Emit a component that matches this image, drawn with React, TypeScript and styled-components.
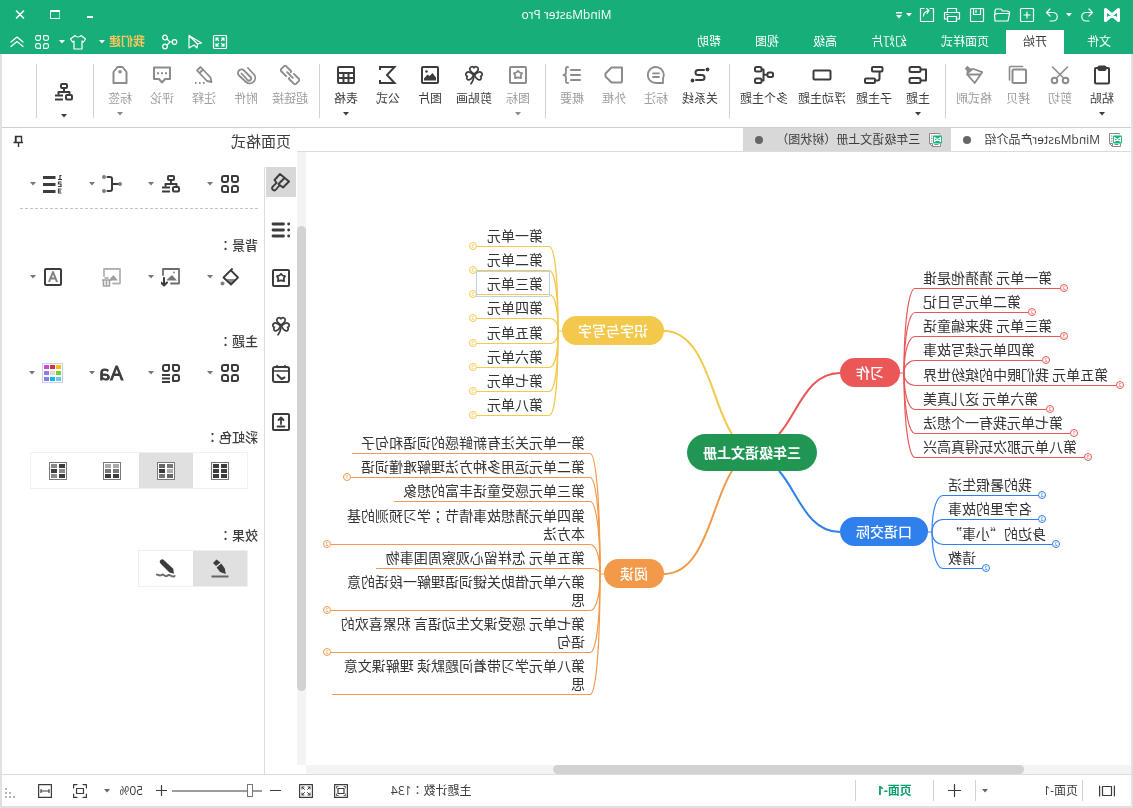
import React from "react";
import styled, { createGlobalStyle, css } from "styled-components";

const ink = "#3c3c3c";
const muted = "#8c8c8c";
const line = "#dcdcdc";
const green = "#17ae7a";

const GlobalStyle = createGlobalStyle`
  *, *::before, *::after { box-sizing: border-box; }
  body {
    margin: 0;
    background: #ffffff;
    color: #333333;
    font: 12px/16px "Open Sans", "Noto Sans CJK SC", sans-serif;
  }
  button, select, input { font: inherit; color: inherit; margin: 0; }
  svg { display: block; flex: none; }
`;

/* ---------- shell ---------- */

/* The window is presented in mirror view: one flip on the shell, everything inside is laid out normally. */
const Shell = styled.div`
  display: flex;
  flex-direction: column;
  min-height: 100vh;
  overflow: hidden;
  transform: scaleX(-1);
`;

const Frame = styled.div`
  flex: 1;
  display: flex;
  flex-direction: column;
  border: 2px solid #e0e0e0;
  border-top: 0;
`;

const PlainButton = styled.button`
  display: flex;
  align-items: center;
  justify-content: center;
  padding: 0;
  border: 0;
  background: transparent;
  cursor: pointer;
`;

/* Full-width punctuation centred in its square. */
const Mark = styled.span`
  font-family: "Noto Sans CJK TC", sans-serif;
`;

/* ---------- header ---------- */

const Header = styled.header`
  background: ${green};
  color: #ffffff;
`;

const TitleBar = styled.div`
  display: grid;
  grid-template-columns: 1fr auto 1fr;
  align-items: center;
  height: 30px;
  padding: 0 12px;
`;

const QuickBar = styled.div`
  display: flex;
  align-items: center;
  gap: 7px;
`;

const QuickButton = styled(PlainButton)`
  width: 18px;
  height: 18px;
`;

const CaretButton = styled(PlainButton)`
  width: 7px;
  height: 18px;
  margin: 0 -2px;
`;

const AppTitle = styled.h1`
  margin: 0;
  font-size: 12px;
  line-height: 16px;
  font-weight: 400;
`;

const WindowControls = styled.div`
  display: flex;
  justify-content: flex-end;
  gap: 18px;
`;

const WindowButton = styled(PlainButton)`
  width: 17px;
  height: 20px;
`;

const MenuBar = styled.div`
  display: flex;
  justify-content: space-between;
  height: 24px;
`;

const MenuTabs = styled.nav`
  display: flex;
  padding-left: 5px;
`;

const MenuTab = styled(PlainButton)<{ $active?: boolean }>`
  padding: 0 17px;
  ${(p) => p.$active && css`background: #ffffff; color: ${ink};`}
  &:first-child { margin-right: 6px; }
`;

const MenuTools = styled.div`
  display: flex;
  align-items: center;
  gap: 7px;
  padding-right: 8px;
  ${CaretButton} { margin: 0 1px 0 -4px; }
`;

const Account = styled.div`
  display: flex;
  align-items: center;
  gap: 7px;
  margin: 0 4px 0 9px;
`;

const Promo = styled(PlainButton)`
  color: #f7c65c;
  font-weight: 700;
`;

/* ---------- ribbon ---------- */

const Ribbon = styled.div`
  display: flex;
  height: 74px;
  padding: 10px 0 9px 8px;
  border-bottom: 1px solid #cfcfcf;
`;

const RibbonGroup = styled.div`
  display: flex;
  padding-right: 5px;
  margin-right: 6px;
  border-right: 1px solid #d2d2d2;
`;

const RibbonItem = styled(PlainButton)<{ $muted?: boolean }>`
  flex-direction: column;
  justify-content: flex-start;
  gap: 5px;
  min-width: 42px;
  padding: 1px 5px 0;
  color: ${(p) => (p.$muted ? muted : ink)};
  white-space: nowrap;
  span { padding-top: 1px; opacity: ${(p) => (p.$muted ? 0.85 : 1)}; }
`;

const RibbonLayout = styled(RibbonItem)`
  width: 45px;
  gap: 12px;
  padding-top: 18px;
`;

/* ---------- workspace ---------- */

const Workspace = styled.div`
  flex: 1;
  display: flex;
`;

const Editor = styled.main`
  flex: 1;
  min-width: 0;
  display: flex;
  flex-direction: column;
`;

const DocTabs = styled.div`
  display: flex;
  height: 24px;
  border-bottom: 1px solid ${line};
`;

const DocTab = styled(PlainButton)<{ $active?: boolean }>`
  gap: 9px;
  padding: 0 12px 0 8px;
  color: ${ink};
  background: ${(p) => (p.$active ? "#ffffff" : "#d8d8d8")};
  white-space: nowrap;
`;

const DocDot = styled.i`
  width: 8px;
  height: 8px;
  margin-left: 4px;
  border-radius: 50%;
  background: #666666;
`;

const CanvasGrid = styled.div`
  flex: 1;
  display: grid;
  grid-template-columns: 1fr 9px;
  grid-template-rows: 1fr 9px;
`;

const Canvas = styled.section`
  position: relative;
  overflow: hidden;
  font-family: "Noto Sans CJK SC", sans-serif;
`;

const VerticalTrack = styled.div`
  display: grid;
  grid-template-rows: 12% 76% 12%;
  background: #f4f4f4;
  &::after { content: ""; grid-row: 2; border-radius: 5px; background: #d2d2d2; }
`;

const HorizontalTrack = styled.div`
  display: grid;
  grid-template-columns: 13fr 57fr 30fr;
  background: #f4f4f4;
  &::after { content: ""; grid-column: 2; border-radius: 5px; background: #d2d2d2; }
`;

const Edges = styled.svg`
  position: absolute;
  inset: 0;
  width: 100%;
  height: 100%;
  fill: none;
`;

const Pill = styled.div<{ $x: number; $y: number; $color: string; $root?: boolean }>`
  position: absolute;
  left: ${(p) => p.$x}px;
  top: ${(p) => p.$y}px;
  padding: ${(p) => (p.$root ? "9px 16px 10px" : "5px 16px 6px")};
  border-radius: 20px;
  background: ${(p) => p.$color};
  color: #ffffff;
  font-size: 14px;
  line-height: 18px;
  font-weight: ${(p) => (p.$root ? 700 : 500)};
  white-space: nowrap;
`;

const Leaf = styled.div<{ $x: number; $y: number; $left: boolean; $pad: number }>`
  position: absolute;
  ${(p) => (p.$left ? css`right: calc(100% - ${p.$x}px);` : css`left: ${p.$x}px;`)}
  bottom: calc(100% - ${(p) => p.$y}px);
  padding: 0 ${(p) => p.$pad}px 2px;
  font-size: 14px;
  line-height: 18px;
  text-align: ${(p) => (p.$left ? "right" : "left")};
  white-space: nowrap;
`;

const LeafLine = styled.div`
  height: 18px;
`;

const BadgeText = styled.text`
  font: 6px/6px "Open Sans", sans-serif;
  text-anchor: middle;
`;

/* ---------- side panel ---------- */

const Side = styled.aside`
  display: flex;
  flex-direction: column;
  width: 295px;
`;

const SideHeader = styled.div`
  display: flex;
  align-items: center;
  justify-content: space-between;
  height: 39px;
  padding: 0 10px 14px 6px;
`;

const SideTitle = styled.h2`
  margin: 0;
  font-size: 15px;
  line-height: 20px;
  font-weight: 400;
  color: ${ink};
`;

const SideBody = styled.div`
  flex: 1;
  display: flex;
`;

const Rail = styled.div`
  display: flex;
  flex-direction: column;
  gap: 18px;
  width: 33px;
  padding-left: 1px;
  border-right: 1px solid ${line};
`;

const RailButton = styled(PlainButton)<{ $active?: boolean }>`
  width: 30px;
  height: 30px;
  color: ${ink};
  background: ${(p) => (p.$active ? "#d8d8d8" : "transparent")};
`;

const Panel = styled.div`
  flex: 1;
  min-width: 0;
  padding: 5px 18px 0 6px;
`;

const ToolRow = styled.div`
  display: grid;
  grid-template-columns: repeat(4, 59px);
  height: 24px;
  padding-left: 18px;
`;

const ToolButton = styled(PlainButton)<{ $muted?: boolean }>`
  justify-content: flex-start;
  gap: 7px;
  color: ${(p) => (p.$muted ? "#a0a0a0" : ink)};
  > svg:last-child:not(:first-child) { color: #777777; }
`;

const Divider = styled.hr`
  margin: 12px 0 28px;
  border: 0;
  border-top: 1px dashed #c4c4c4;
`;

const PanelSection = styled.section<{ $after: number }>`
  margin-bottom: ${(p) => p.$after}px;
`;

const PanelHeading = styled.h3`
  margin: 0 0 12px;
  font-size: 13px;
  line-height: 16px;
  font-weight: 500;
  color: ${ink};
`;

const Segments = styled.div`
  display: inline-flex;
  margin: -5px 0 0 10px;
  border: 1px solid #f0f0f0;
`;

const Segment = styled(PlainButton)<{ $active?: boolean }>`
  width: 54px;
  height: 35px;
  color: ${ink};
  background: ${(p) => (p.$active ? "#e0e0e0" : "transparent")};
`;

/* ---------- status bar ---------- */

const StatusBar = styled.footer`
  display: flex;
  align-items: center;
  justify-content: space-between;
  height: 32px;
  border-top: 1px solid ${line};
  color: ${ink};
`;

const PageBar = styled.div`
  display: flex;
  align-items: center;
  height: 21px;
  > * { height: 21px; border-right: 1px solid #d2d2d2; }
`;

const PageCell = styled(PlainButton)<{ $w: number }>`
  width: ${(p) => p.$w}px;
`;

const PageTab = styled(PageCell)`
  color: #0ea06c;
  font-weight: 700;
`;

const SelectBox = styled.label<{ $w: number; $pad: number }>`
  display: flex;
  align-items: center;
  justify-content: space-between;
  width: ${(p) => p.$w}px;
  padding: 0 6px 0 ${(p) => p.$pad}px;
  color: #666666;
`;

const BareSelect = styled.select`
  flex: 1;
  min-width: 0;
  padding: 0;
  border: 0;
  background: transparent;
  color: ${ink};
  appearance: none;
`;

const ViewBar = styled.div`
  display: flex;
  align-items: center;
  color: ${ink};
`;

const Count = styled.span`
  margin-right: 32px;
`;

const ViewButton = styled(PlainButton)<{ $w: number }>`
  width: ${(p) => p.$w}px;
  height: 20px;
`;

const ZoomRange = styled.input`
  width: 90px;
  height: 14px;
  appearance: none;
  background: linear-gradient(#9c9c9c, #9c9c9c) center / 100% 2px no-repeat;
  &::-webkit-slider-thumb {
    appearance: none;
    width: 6px;
    height: 13px;
    border: 1px solid #777777;
    background: #ffffff;
  }
`;

const Grip = styled.div`
  align-self: flex-end;
  width: 14px;
  margin-left: 12px;
  padding-bottom: 2px;
  color: #b4b4b4;
`;

/* ---------- icons ---------- */

const Glyph = ({ size = 20, box = 20, w = 2, children }: { size?: number; box?: number; w?: number; children: React.ReactNode }) => (
  <svg width={size} height={size} viewBox={`0 0 ${box} ${box}`} fill="none" stroke="currentColor" strokeWidth={w} strokeLinejoin="round" strokeLinecap="round" aria-hidden="true">
    {children}
  </svg>
);

const Caret = () => (
  <svg width="6" height="4" viewBox="0 0 6 4" fill="currentColor" aria-hidden="true"><path d="M0 0h6L3 3.5z" /></svg>
);

const fill = { fill: "currentColor", stroke: "none" };

const CloverShape = () => (
  <g strokeWidth="1.7">
    <path d="M10 9C7 7 5.500 5.500 5.800 3.700 6.200 1.500 9 1 10 2.900 11 1 13.800 1.500 14.200 3.700 14.500 5.500 13 7 10 9z" />
    <path d="M9.500 9.800C7 7.500 4.500 6.200 2.800 7.500 1 9 1.800 11 3.400 11.300 2 13 3.200 15 5 14.800 7 14.500 8.500 12.500 9.500 9.800z" />
    <path d="M10.500 9.800C13 7.500 15.500 6.200 17.200 7.500 19 9 18.200 11 16.600 11.300 18 13 16.800 15 15 14.800 13 14.500 11.500 12.500 10.500 9.800z" />
    <path d="M10 10c.2 3.500 1 6.500 3 8.800" />
  </g>
);

const FlowerFrame = () => (
  <>
    <rect x="2" y="2" width="16" height="16" rx="1" />
    <path strokeWidth="1.8" d="M10 5.800l1.600 1.700 2.400.7-1.200 2.200.3 2.600-3.100-.6-3.100.6.3-2.600L6 8.200l2.400-.7z" />
  </>
);

const Petals = () => (
  <path d="M2 4a2 2 0 0 1 2-2h4v4a2 2 0 0 1-2 2H4a2 2 0 0 1-2-2zM18 4a2 2 0 0 0-2-2h-4v4a2 2 0 0 0 2 2h2a2 2 0 0 0 2-2zM2 16a2 2 0 0 0 2 2h4v-4a2 2 0 0 0-2-2H4a2 2 0 0 0-2 2zM18 16a2 2 0 0 1-2 2h-4v-4a2 2 0 0 1 2-2h2a2 2 0 0 1 2 2z" />
);

const TreeShape = () => (
  <>
    <rect x="7" y="2" width="6" height="4" rx="1" />
    <path d="M10 6v4M4.500 12.500V10h11v2" />
    <rect x="2" y="13" width="6" height="4.500" rx="1" />
    <path strokeLinecap="butt" d="M11 13.500h8M11 17.500h8" />
  </>
);

const icons: Record<string, React.ReactNode> = {
  paste: <><rect x="3" y="3" width="14" height="15.500" rx="1" /><rect x="6.500" y="1.500" width="7" height="3.500" rx="1" /></>,
  cut: <><path d="M2.500 2l11 11M17.500 2l-11 11" strokeWidth="1.600" /><circle cx="4.500" cy="15.500" r="2.800" /><circle cx="15.500" cy="15.500" r="2.800" /></>,
  copy: <><rect x="2" y="4.500" width="13.500" height="13.500" rx="1" /><path d="M5.500 1.500H17.500a1 1 0 0 1 1 1V15" strokeWidth="1.600" /></>,
  brush: <><path {...fill} d="M16.500.8l2.700 2.700-2 2.500 .7 4.500-8.400-7 4.500-.3z" /><path strokeWidth="1.800" d="M10.500 4L1.800 7.200 9.300 18l7-8M3.500 9.500h12" /></>,
  topic: <><rect x="7.500" y="2" width="11" height="5" rx="1.500" /><rect x="7.500" y="13" width="11" height="5" rx="1.500" /><path d="M7 4.500H2v11h5" /></>,
  subtopic: <><rect x="1.500" y="2" width="10.500" height="4.500" rx="1" /><rect x="9" y="13.500" width="10" height="4.500" rx="1" /><path d="M4.500 7v6.500a2 2 0 0 0 2 2H9" /></>,
  floating: <rect x="1.500" y="5.500" width="17" height="9" rx="1" />,
  multi: <><rect x="1" y="7.500" width="5.500" height="4.500" rx="1.500" /><path d="M7 9.800h3.500M12 4.500h-1.500v11H12" /><rect x="12.500" y="2" width="6.500" height="4.500" rx="1.500" /><rect x="12.500" y="13.500" width="6.500" height="4.500" rx="1.500" /></>,
  relation: <><circle {...fill} cx="2.500" cy="4.500" r="1.900" /><path d="M6 5h6a2.500 2.500 0 0 1 0 5H8a2.500 2.500 0 0 0 0 5h6" /><circle {...fill} cx="17.500" cy="15.500" r="1.900" /></>,
  callout: <><path strokeWidth="1.800" d="M3 18v-4.500A8 8 0 1 1 10 18z" /><path strokeWidth="1.800" d="M7 8.300h6M7 12h6" /></>,
  boundary: <path d="M2 2.500h10.500l6 6v3l-6 6H3a1 1 0 0 1-1-1z" />,
  summary: <><path d="M2 5h9M2 10h9M2 15h9" /><path strokeWidth="1.800" d="M14 2c3 0 2 2 2 5 0 2 .5 3 2.500 3-2 0-2.500 1-2.500 3 0 3 1 5-2 5" /></>,
  flower: <FlowerFrame />,
  clover: <CloverShape />,
  picture: <><rect x="2" y="2" width="16" height="16" rx="1" /><path {...fill} d="M4 15.500v-3l3.500-4.500 3 3 2-1.500 3.500 4v2z" /><circle {...fill} cx="13.500" cy="6.500" r="1.300" /></>,
  sigma: <path strokeLinecap="butt" strokeLinejoin="miter" d="M18 5V2H3.500L11 10l-7.500 8H18v-3" />,
  table: <><rect x="2" y="2" width="16" height="16" rx="1" /><path d="M2 8h16M2 13h16M7.500 8v10M12.500 8v10" /></>,
  link: <g transform="rotate(-45 10 10)" strokeWidth="1.900"><path d="M8 6.500H0.500a1 1 0 0 0-1 1v5a1 1 0 0 0 1 1H7.500a1 1 0 0 0 1-1M12 13.500h7.500a1 1 0 0 0 1-1v-5a1 1 0 0 0-1-1H12.500a1 1 0 0 0-1 1M6 10h8" /></g>,
  clip: <path strokeWidth="1.800" d="M14.500 8.500l-6 6.500a2 2 0 0 1-3-3L12 5.500a3.500 3.500 0 0 1 5 5L10 17a5.500 5.500 0 0 1-8-7.500L8 3" />,
  note: <><path d="M13.500 2l3.500 3.500L7 16l-4.500 1L3.500 12.500zM11 4.500L14.500 8" strokeWidth="1.800" /><path strokeDasharray="1.5 2.5" strokeLinecap="butt" d="M9.500 18h9.500" /></>,
  comment: <><path d="M2 2.500h16v11.500h-5l-3 3.500-3-3.500H2z" /><path strokeDasharray="2 2" strokeLinecap="butt" d="M5 8.300h10" /></>,
  tag: <><path d="M3.500 7l4-5h5l4 5v11h-13z" /><circle {...fill} cx="10" cy="6.800" r="1.800" /></>,
  tree: <TreeShape />,
  petals: <Petals />,
  bracket: <><g {...fill} opacity=".65"><circle cx="2" cy="10" r="2" /><circle cx="18" cy="3" r="2" /><circle cx="18" cy="17" r="2" /></g><path d="M4 10h6M14.500 3H12a2 2 0 0 0-2 2v10a2 2 0 0 0 2 2h2.500" /></>,
  numbering: <><path strokeLinecap="butt" strokeWidth="2.800" d="M7.500 3.500H20M7.500 10.500H20M7.500 17.500H20" /><path strokeWidth="1.200" strokeLinejoin="miter" strokeLinecap="butt" d="M1.500 1.500h1.500v4M1 5.500h4M1.500 8h3v2h-2.500v2.500h3M1.500 15h3v4h-3M2 17h2.500" /></>,
  fillTool: <><path strokeWidth="1.800" d="M8 2l8.500 8.500-7.500 7L2 10.500l6.500-6.500" /><path {...fill} opacity=".6" d="M3.500 12h12.500l-7 6z" /><circle {...fill} opacity=".65" cx="17.500" cy="16.500" r="2" /></>,
  insertImage: <><path strokeWidth="1.800" opacity=".75" d="M10 16.500H2V2h16v6" /><path {...fill} opacity=".7" d="M4 13.500L9 8l5 4.500v1z" /><circle {...fill} opacity=".6" cx="7" cy="5.500" r="1" /><path d="M17 11v7M14 15.500l3 3 3-3" /></>,
  removeImage: <><path strokeWidth="1.800" opacity=".8" d="M9 16.500H2V2h16v7" /><path {...fill} d="M4 13.500L8.500 8l3.500 3.500v2z" /><path strokeWidth="1.600" d="M11 13h9M12.500 13v6h6v-6M14 11h3M15.500 14.500v3" /></>,
  watermark: <><rect x="2" y="2" width="16" height="16" rx="1" /><path opacity=".65" strokeLinecap="butt" d="M6 15l4-10 4 10M7.500 11.500h5" /></>,
  petalList: <><path d="M2 4a2 2 0 0 1 2-2h4v4a2 2 0 0 1-2 2H4a2 2 0 0 1-2-2zM18 4a2 2 0 0 0-2-2h-4v4a2 2 0 0 0 2 2h2a2 2 0 0 0 2-2zM18 16a2 2 0 0 1-2 2h-4v-4a2 2 0 0 1 2-2h2a2 2 0 0 1 2 2z" transform="translate(20 0) scale(-1 1)" /><path strokeLinecap="butt" strokeWidth="1.800" d="M11 12h8M11 15.500h8M11 19h8" /></>,
  style: <path strokeWidth="1.900" d="M11 2L2 9.500l6 6 3.300-2.500 3.700 4.500a2 2 0 0 0 3.300-2.800L14.500 10.800 16.500 8zM6.500 6l6 6" />,
  outline: <><path strokeWidth="2.800" d="M7.500 4h10.500M7.500 10h10.500M7.500 16h10.500" /><path strokeWidth="2.800" d="M2.300 4h.1M2.300 10h.1M2.300 16h.1" /></>,
  task: <><rect x="2" y="3" width="16" height="15" rx="2" /><path d="M2 7h16M6 1.500v2M14 1.500v2" strokeWidth="1.600" /><path d="M6.500 13.500l3 1.500 4-4" /></>,
  upload: <><rect x="2" y="2" width="16" height="16" rx="1" /><path strokeWidth="1.800" d="M10 12V6M7.500 8L10 5.500 12.500 8M6.500 14.500h7" /></>,
  penLine: <><path {...fill} d="M13.500.5l3.500 3.500-3 3-4.500-3.500z" /><path {...fill} d="M8.700 4.500l4.700 4-3.500 4.500-5.700 2 1-5.500z" /><path opacity=".75" strokeLinecap="butt" d="M1.500 17.500h17" /></>,
  penWave: <><path {...fill} d="M12 1.200a2.200 2.200 0 0 1 3.500 3.300L6.500 13.500l-4.500 1.300 .8-5z" /><path opacity=".75" d="M1.500 17c2.500 2.500 4.500-3 7-.5s4-2 5.500-.7 3 .5 5-.2" /></>,
};

const FontSample = styled.span`
  width: 22px;
  margin: 0 -1px;
  font: 400 20px/20px "Open Sans", sans-serif;
  -webkit-text-stroke: 1px currentColor;
`;

const tint = ["#f2c200", "#dc2f4e", "#c44fce", "#76cf3f", "#dcdcdc", "#8f7bea", "#6fcbe0", "#12b5f5", "#7b83f4"];

const PaletteIcon = () => (
  <svg width="21" height="20" viewBox="0 0 21 20" aria-hidden="true">
    <rect x=".5" y=".5" width="20" height="19" fill="#fff" stroke="#c9cfe6" />
    {tint.map((c, i) => <rect key={c} x={2 + (i % 3) * 6} y={2 + Math.floor(i / 3) * 6} width="5" height="4" fill={c} />)}
  </svg>
);

const RainbowIcon = ({ shades }: { shades: string[] }) => (
  <svg width="18" height="18" viewBox="0 0 18 18" aria-hidden="true">
    <rect x=".5" y=".5" width="17" height="17" fill="#fff" stroke="#777" />
    {shades.map((c, i) => <rect key={i} x={2 + (i % 2) * 8} y={2 + Math.floor(i / 2) * 5} width="6" height="4" fill={c} />)}
  </svg>
);

/* ---------- content ---------- */

type Tool = { icon: string; label: string; muted?: boolean; caret?: boolean };

const ribbonGroups: Tool[][] = [
  [
    { icon: "paste", label: "粘贴", caret: true },
    { icon: "cut", label: "剪切", muted: true },
    { icon: "copy", label: "拷贝", muted: true },
    { icon: "brush", label: "格式刷", muted: true },
  ],
  [
    { icon: "topic", label: "主题", caret: true },
    { icon: "subtopic", label: "子主题" },
    { icon: "floating", label: "浮动主题" },
    { icon: "multi", label: "多个主题" },
  ],
  [
    { icon: "relation", label: "关系线" },
    { icon: "callout", label: "标注", muted: true },
    { icon: "boundary", label: "外框", muted: true },
    { icon: "summary", label: "概要", muted: true },
  ],
  [
    { icon: "flower", label: "图标", muted: true, caret: true },
    { icon: "clover", label: "剪贴画" },
    { icon: "picture", label: "图片" },
    { icon: "sigma", label: "公式" },
    { icon: "table", label: "表格", caret: true },
  ],
  [
    { icon: "link", label: "超链接", muted: true },
    { icon: "clip", label: "附件", muted: true },
    { icon: "note", label: "注释", muted: true },
    { icon: "comment", label: "评论", muted: true },
    { icon: "tag", label: "标签", muted: true, caret: true },
  ],
];

type LeafData = { text: string; y: number; end: number; badge?: string };
type Branch = {
  title: string; color: string; left: boolean;
  pill: [number, number]; hub: [number, number]; stub: number; start: number; pad: number;
  trunk: string; leaves: LeafData[];
};

const branches: Branch[] = [
  {
    title: "习作", color: "#eb5757", left: true, pill: [231, 206], hub: [227, 221], stub: 231, start: 216, pad: 8,
    trunk: "M352 282C334 263 325 221 291 221",
    leaves: [
      { text: "第一单元 猜猜他是谁", y: 136, end: 67, badge: "2" },
      { text: "第二单元写日记", y: 160, end: 99, badge: "2" },
      { text: "第三单元 我来编童话", y: 184, end: 67, badge: "3" },
      { text: "第四单元续写故事", y: 208, end: 85, badge: "2" },
      { text: "第五单元 我们眼中的缤纷世界", y: 233, end: 11, badge: "2" },
      { text: "第六单元 这儿真美", y: 257, end: 81, badge: "2" },
      { text: "第七单元我有一个想法", y: 281, end: 57, badge: "1" },
      { text: "第八单元那次玩得真高兴", y: 305, end: 43, badge: "3" },
    ],
  },
  {
    title: "口语交际", color: "#2f80ed", left: true, pill: [203, 365], hub: [199, 380], stub: 203, start: 188, pad: 5,
    trunk: "M352 319C334 338 325 380 291 380",
    leaves: [
      { text: "我的暑假生活", y: 343, end: 89, badge: "2" },
      { text: "名字里的故事", y: 367, end: 89, badge: "2" },
      { text: "身边的“小事”", y: 392, end: 75, badge: "2" },
      { text: "请教", y: 416, end: 145, badge: "2" },
    ],
  },
  {
    title: "识字与写字", color: "#f2c94c", left: false, pill: [467, 164], hub: [573, 179], stub: 569, start: 582, pad: 6,
    trunk: "M399 282C419 253 425 179 467 179",
    leaves: ["一", "二", "三", "四", "五", "六", "七", "八"].map((n, i) => ({
      text: `第${n}单元`, y: [94, 118, 142, 166, 191, 215, 239, 263][i], end: 658, badge: i === 3 ? "2" : "3",
    })),
  },
  {
    title: "阅读", color: "#f2994a", left: false, pill: [467, 407], hub: [531, 422], stub: 527, start: 541, pad: 5,
    trunk: "M399 319C419 348 425 422 467 422",
    leaves: [
      { text: "第一单元关注有新鲜感的词语和句子", y: 301, end: 779 },
      { text: "第二单元运用多种方法理解难懂词语", y: 325, end: 784, badge: "1" },
      { text: "第三单元感受童话丰富的想象", y: 349, end: 737 },
      { text: "第四单元猜想故事情节；学习预测的基\n本方法", y: 392, end: 804, badge: "2" },
      { text: "第五单元 怎样留心观察周围事物", y: 416, end: 755 },
      { text: "第六单元借助关键词语理解一段话的意\n思", y: 458, end: 804, badge: "2" },
      { text: "第七单元 感受课文生动语言 积累喜欢的\n语句", y: 500, end: 804, badge: "2" },
      { text: "第八单元学习带着问题默读 理解课文意\n思", y: 542, end: 799 },
    ],
  },
];

const withMarks = (text: string) =>
  text.split(/([：；（）])/).map((part, i) => (i % 2 ? <Mark key={i}>{part}</Mark> : part));

const leafPath = (b: Branch, l: LeafData) => {
  const [hx, hy] = b.hub;
  const y = l.y + 0.5;
  const side = b.left ? -1 : 1;
  const end = l.badge ? l.end - side * 4 : l.end;
  return `M${hx} ${hy}C${hx} ${hy + (y - hy) * 0.7} ${b.start - side * 5} ${y} ${b.start} ${y}H${end}`;
};

const MindMap = () => (
  <Canvas aria-label="思维导图">
    <Edges aria-hidden="true">
      {branches.map((b) => (
        <g key={b.title} stroke={b.color}>
          <path d={b.trunk} strokeWidth="2" />
          <path d={`M${b.stub} ${b.hub[1]}H${b.hub[0]}`} />
          {b.leaves.map((l) => <path key={l.text} d={leafPath(b, l)} strokeWidth="1.200" />)}
          {b.leaves.filter((l) => l.badge).map((l) => (
            <g key={l.text}>
              <circle cx={l.end} cy={l.y} r="3.500" fill="#fff" />
              <BadgeText x={l.end} y={l.y + 2} fill={b.color} stroke="none">{l.badge}</BadgeText>
            </g>
          ))}
        </g>
      ))}
      <rect x="581.500" y="119.500" width="73" height="25" stroke="#b9d2f3" />
    </Edges>
    {branches.map((b) => (
      <React.Fragment key={b.title}>
        <Pill $x={b.pill[0]} $y={b.pill[1]} $color={b.color}>{b.title}</Pill>
        {b.leaves.map((l) => (
          <Leaf key={l.text} $x={b.start} $y={l.y} $left={b.left} $pad={b.pad}>
            {l.text.split("\n").map((row) => <LeafLine key={row}>{withMarks(row)}</LeafLine>)}
          </Leaf>
        ))}
      </React.Fragment>
    ))}
    <Pill $x={314} $y={282} $color="#219653" $root>三年级语文上册</Pill>
  </Canvas>
);

const DocIcon = () => (
  <svg width="14" height="14" viewBox="0 0 14 14" aria-hidden="true">
    <path d="M3.500 1.500V.5h10v10l-3 3h-8v-3M10.500 13.500v-3h3" fill="#fff" stroke="#8a8a8a" />
    <path d="M4.500 11.500h4M10.500 3h1.500M10.500 5.500h1.500M10.500 8h1.500" stroke="#8a8a8a" />
    <rect x="1" y="2.500" width="9" height="8" rx="1" fill="#12b57c" />
    <path d="M2.500 4.500v4l6-4v4z" fill="none" stroke="#fff" strokeWidth="1.200" />
  </svg>
);

const thin = { w: 1.2, size: 18, box: 18 };

const quick = [
  { label: "新建", art: <><rect x="2.500" y="2.500" width="13" height="13" rx="1" /><path d="M9 6v6M6 9h6" /></> },
  { label: "打开", art: <path d="M1.500 7.500V6l2-1h5l1.500-2h5l1 1.500v3M1.500 7.500h12l3 1-.5 6.500H3z" /> },
  { label: "保存", art: <><rect x="2.500" y="2.500" width="13" height="13" rx="1" /><path d="M5.500 3v5.500h7V3M10 4v2.500" /></> },
  { label: "打印", art: <><path d="M4.500 6V2.500h9V6M4 13H1.500V6.500h15V13H14" /><rect x="4.500" y="10.500" width="9" height="5" /><path d="M13 8.500h1.500" /></> },
  { label: "导出", art: <path d="M6 2.500H2.500v13h13v-13H12M12.500 10c0-3-1.500-4.500-5-5.500M9.500 2.500L7 4.500l2 3" /> },
];

const App = () => (
  <Shell>
    <GlobalStyle />
    <Header>
      <TitleBar>
        <QuickBar>
          <svg width="18" height="16" viewBox="0 0 18 16" fill="none" stroke="#fff" strokeWidth="3" strokeLinejoin="round" aria-hidden="true">
            <path d="M2.500 2.500v11l13-11v11z" />
          </svg>
          <QuickButton aria-label="撤销"><Glyph {...thin}><path d="M7 3L3.500 6.500 7 10M3.500 6.500H10a4 4 0 0 1 0 8.500H7" /></Glyph></QuickButton>
          <CaretButton aria-label="撤销列表"><Caret /></CaretButton>
          <QuickButton aria-label="重做"><Glyph {...thin}><path d="M11 3l3.500 3.500L11 10M14.500 6.500H8A4 4 0 0 0 8 15h3" /></Glyph></QuickButton>
          {quick.map((q) => <QuickButton key={q.label} aria-label={q.label}><Glyph {...thin}>{q.art}</Glyph></QuickButton>)}
          <CaretButton aria-label="导出列表"><Caret /></CaretButton>
          <CaretButton aria-label="自定义工具栏">
            <svg width="6" height="7" viewBox="0 0 6 7" fill="#fff" aria-hidden="true"><path d="M0 0h6v1.500H0zM0 3h6L3 6.500z" /></svg>
          </CaretButton>
        </QuickBar>
        <AppTitle>MindMaster Pro</AppTitle>
        <WindowControls>
          <WindowButton aria-label="最小化"><Glyph size={10} box={10}><path strokeLinecap="butt" d="M2 7h6" /></Glyph></WindowButton>
          <WindowButton aria-label="最大化"><Glyph size={10} box={10} w={1}><rect x=".5" y=".5" width="9" height="8" /><path d="M.5 1.500h9" /></Glyph></WindowButton>
          <WindowButton aria-label="关闭"><Glyph size={10} box={10} w={1.6}><path d="M1.500 1l7 7M8.500 1l-7 7" /></Glyph></WindowButton>
        </WindowControls>
      </TitleBar>
      <MenuBar>
        <MenuTabs>
          {["文件", "开始", "页面样式", "幻灯片", "高级", "视图", "帮助"].map((t) => (
            <MenuTab key={t} $active={t === "开始"}>{t}</MenuTab>
          ))}
        </MenuTabs>
        <MenuTools>
          <QuickButton aria-label="全屏"><Glyph {...thin}><rect x="2.500" y="2.500" width="13" height="13" rx="1" /><path d="M5 7.500V5h2.500M5 5l2.500 2.500M13 7.500V5h-2.500M13 5l-2.500 2.500M5 10.500V13h2.500M5 13l2.500-2.500M13 10.500V13h-2.500M13 13l-2.500-2.500" /></Glyph></QuickButton>
          <QuickButton aria-label="发送"><Glyph {...thin}><path d="M15 2.500L2.500 10l4 1 .5 4L10 12l5 3zM15 2.500L6.500 11" /></Glyph></QuickButton>
          <QuickButton aria-label="分享"><Glyph {...thin}><circle cx="4.500" cy="9" r="2.300" /><circle cx="14" cy="4.500" r="2.300" /><circle cx="14" cy="13.500" r="2.300" /><path d="M6.800 9H9l3-3M9 9l3 3" /></Glyph></QuickButton>
          <Account>
            <Promo>我们建</Promo>
            <CaretButton aria-label="账户"><Caret /></CaretButton>
          </Account>
          <QuickButton aria-label="皮肤"><Glyph {...thin}><path d="M6 2.500L1.500 6l2 3 1.500-1v8h8V8l1.500 1 2-3L12 2.500c-1 2-5 2-6 0z" /></Glyph></QuickButton>
          <CaretButton aria-label="皮肤列表"><Caret /></CaretButton>
          <QuickButton aria-label="应用"><Glyph size={16} box={20} w={1.4}><Petals /></Glyph></QuickButton>
          <QuickButton aria-label="收起功能区"><Glyph {...thin}><path d="M3 9l6-5 6 5M3 13.500l6-5 6 5" /></Glyph></QuickButton>
        </MenuTools>
      </MenuBar>
    </Header>

    <Frame>
      <Ribbon>
        {ribbonGroups.map((group) => (
          <RibbonGroup key={group[0].label}>
            {group.map((t) => (
              <RibbonItem key={t.label} $muted={t.muted}>
                <Glyph>{icons[t.icon]}</Glyph>
                <span>{t.label}</span>
                {t.caret && <Caret />}
              </RibbonItem>
            ))}
          </RibbonGroup>
        ))}
        <RibbonGroup>
          <RibbonLayout aria-label="布局"><Glyph>{icons.tree}</Glyph><Caret /></RibbonLayout>
        </RibbonGroup>
      </Ribbon>

      <Workspace>
        <Editor>
          <DocTabs>
            <DocTab $active><DocIcon />MindMaster产品介绍<DocDot /></DocTab>
            <DocTab><DocIcon /><span>{withMarks("三年级语文上册（树状图）")}</span><DocDot /></DocTab>
          </DocTabs>
          <CanvasGrid>
            <MindMap />
            <VerticalTrack />
            <HorizontalTrack />
          </CanvasGrid>
        </Editor>

        <Side>
          <SideHeader>
            <SideTitle>页面格式</SideTitle>
            <PlainButton aria-label="固定面板">
              <Glyph size={12} box={12} w={1.4}><path strokeLinejoin="miter" strokeLinecap="butt" d="M2.500 7V1.500h6V7M1 7.500h9.500M5.500 7.500V12M8 1.500V7" /></Glyph>
            </PlainButton>
          </SideHeader>
          <SideBody>
            <Rail>
              {[["style", "页面格式"], ["outline", "大纲"], ["flower", "图标"], ["clover", "剪贴画"], ["task", "任务"], ["upload", "导出"]].map(([i, l]) => (
                <RailButton key={i} aria-label={l} $active={i === "style"}><Glyph>{icons[i]}</Glyph></RailButton>
              ))}
            </Rail>
            <Panel>
              <ToolRow>
                {[["petals", "布局"], ["tree", "结构"], ["bracket", "连接线"], ["numbering", "编号"]].map(([i, l]) => (
                  <ToolButton key={i} aria-label={l}><Glyph>{icons[i]}</Glyph><Caret /></ToolButton>
                ))}
              </ToolRow>
              <Divider />
              <PanelSection $after={44}>
                <PanelHeading>{withMarks("背景：")}</PanelHeading>
                <ToolRow>
                  <ToolButton aria-label="背景填充"><Glyph>{icons.fillTool}</Glyph><Caret /></ToolButton>
                  <ToolButton aria-label="插入背景图片"><Glyph>{icons.insertImage}</Glyph><Caret /></ToolButton>
                  <ToolButton aria-label="移除背景图片" $muted><Glyph>{icons.removeImage}</Glyph></ToolButton>
                  <ToolButton aria-label="水印"><Glyph>{icons.watermark}</Glyph><Caret /></ToolButton>
                </ToolRow>
              </PanelSection>
              <PanelSection $after={44}>
                <PanelHeading>{withMarks("主题：")}</PanelHeading>
                <ToolRow>
                  <ToolButton aria-label="主题"><Glyph>{icons.petals}</Glyph><Caret /></ToolButton>
                  <ToolButton aria-label="主题样式"><Glyph>{icons.petalList}</Glyph><Caret /></ToolButton>
                  <ToolButton aria-label="主题字体"><FontSample>Aa</FontSample><Caret /></ToolButton>
                  <ToolButton aria-label="主题颜色"><PaletteIcon /><Caret /></ToolButton>
                </ToolRow>
              </PanelSection>
              <PanelSection $after={38}>
                <PanelHeading>{withMarks("彩虹色：")}</PanelHeading>
                <Segments>
                  <Segment aria-label="彩虹色 1"><RainbowIcon shades={[ink, ink, ink, ink, ink, ink]} /></Segment>
                  <Segment aria-label="彩虹色 2" $active><RainbowIcon shades={["#777", "#666", "#aaa", ink, "#666", "#777"]} /></Segment>
                  <Segment aria-label="彩虹色 3"><RainbowIcon shades={["#aaa", "#aaa", "#777", "#777", ink, ink]} /></Segment>
                  <Segment aria-label="彩虹色 4"><RainbowIcon shades={[ink, "#888", "#888", ink, ink, "#888"]} /></Segment>
                </Segments>
              </PanelSection>
              <PanelSection $after={0}>
                <PanelHeading>{withMarks("效果：")}</PanelHeading>
                <Segments>
                  <Segment aria-label="普通" $active><Glyph>{icons.penLine}</Glyph></Segment>
                  <Segment aria-label="手绘"><Glyph>{icons.penWave}</Glyph></Segment>
                </Segments>
              </PanelSection>
            </Panel>
          </SideBody>
        </Side>
      </Workspace>

      <StatusBar>
        <PageBar>
          <PageCell $w={49} aria-label="页面视图"><Glyph size={16} box={16} w={1.2}><rect x="3.500" y="3.500" width="9" height="9" /><path d="M.6 3v10M15.400 3v10" /></Glyph></PageCell>
          <SelectBox $w={107} $pad={4}>
            <BareSelect aria-label="页面"><option>页面-1</option></BareSelect>
            <Caret />
          </SelectBox>
          <PageCell $w={42} aria-label="新建页面"><Glyph size={13} box={13} w={1.2}><path d="M6.500.5v12M.5 6.500h12" /></Glyph></PageCell>
          <PageTab $w={78}>页面-1</PageTab>
        </PageBar>
        <ViewBar>
          <Count>{withMarks("主题计数：134")}</Count>
          <ViewButton $w={36} aria-label="适合页面"><Glyph size={14} box={14} w={1.2}><rect x=".6" y=".6" width="12.800" height="12.800" /><rect x="4" y="4.500" width="6" height="5" /><path d="M2.500 4V2.500H4M10 2.500h1.500V4M2.500 10v1.500H4M10 11.500h1.500V10" strokeWidth=".8" /></Glyph></ViewButton>
          <ViewButton $w={34} aria-label="全屏显示"><Glyph size={14} box={14} w={1.2}><rect x=".6" y=".6" width="12.800" height="12.800" /><path strokeWidth="1" d="M3 5V3h2M3 3l2.500 2.500M11 5V3H9M11 3L8.500 5.500M3 9v2h2M3 11l2.500-2.500M11 9v2H9M11 11L8.500 8.500" /></Glyph></ViewButton>
          <ViewButton $w={27} aria-label="缩小"><Glyph size={11} box={11} w={1.2}><path d="M.5 5.500h10" /></Glyph></ViewButton>
          <ZoomRange type="range" min={0} max={100} defaultValue={11} aria-label="缩放" />
          <ViewButton $w={20} aria-label="放大"><Glyph size={11} box={11} w={1.2}><path d="M.5 5.500h10M5.500.5v10" /></Glyph></ViewButton>
          <SelectBox $w={54} $pad={9}>
            <BareSelect aria-label="缩放比例"><option>50%</option></BareSelect>
            <Caret />
          </SelectBox>
          <ViewButton $w={35} aria-label="适合选区"><Glyph size={14} box={14} w={1.2}><path d="M.6 4V.6H4M10 .6h3.400V4M.6 10v3.400H4M10 13.400h3.400V10" /><rect x="3.500" y="4.500" width="7" height="5" /></Glyph></ViewButton>
          <ViewButton $w={35} aria-label="适合宽度"><Glyph size={14} box={14} w={1.2}><rect x=".6" y=".6" width="12.800" height="12.800" /><path d="M3 7h8M3 5.500v3M11 5.500v3" /></Glyph></ViewButton>
          <Grip>
            <svg width="11" height="11" viewBox="0 0 11 11" fill="currentColor" aria-hidden="true"><path d="M9 0h2v2H9zM9 4h2v2H9zM9 8h2v2H9zM5 4h2v2H5zM5 8h2v2H5zM1 8h2v2H1z" /></svg>
          </Grip>
        </ViewBar>
      </StatusBar>
    </Frame>
  </Shell>
);

export default App;
